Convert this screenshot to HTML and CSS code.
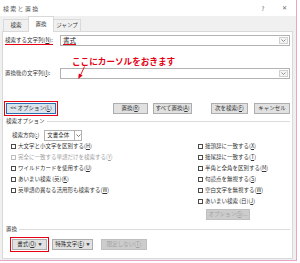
FILE: index.html
```html
<!DOCTYPE html>
<html lang="ja">
<head>
<meta charset="utf-8">
<title>検索と置換</title>
<link rel="stylesheet" href="styles.css">
</head>
<body>
<div class="dialog">
  <div class="titlebar">
    <span class="title">検索と置換</span>
    <span class="help">?</span>
    <span class="close">✕</span>
  </div>
  <div class="tabs">
    <span class="tab">検索</span>
    <span class="tab active">置換</span>
    <span class="tab wide">ジャンプ</span>
  </div>
  <div class="panel">
    <div class="field-row find">
      <span class="lbl"><span class="mark">検索する文字列(<u>N</u>):</span></span>
      <div class="combo">
        <span class="val"><span class="mark">書式</span></span>
        <span class="drop"><svg width="5" height="3" viewBox="0 0 5 3"><polyline points="0.5,0.5 2.5,2.5 4.5,0.5" fill="none" stroke="#777" stroke-width="0.8"/></svg></span>
      </div>
    </div>
    <div class="field-row repl">
      <span class="lbl">置換後の文字列(<u>I</u>):</span>
      <div class="combo">
        <span class="val"></span>
        <span class="drop"><svg width="5" height="3" viewBox="0 0 5 3"><polyline points="0.5,0.5 2.5,2.5 4.5,0.5" fill="none" stroke="#777" stroke-width="0.8"/></svg></span>
      </div>
    </div>
    <div class="btn-row">
      <span class="btn focus w-opt">&lt;&lt; オプション(<u>L</u>)</span>
      <span class="btn w-rep">置換(<u>R</u>)</span>
      <span class="btn w-all">すべて置換(<u>A</u>)</span>
      <span class="btn w-next">次を検索(<u>F</u>)</span>
      <span class="btn w-cancel">キャンセル</span>
    </div>
    <div class="section"><span>検索オプション</span><i class="rule"></i></div>
    <div class="dir-row">
      <span>検索方向(<u>:</u>)</span>
      <div class="select">
        <span class="val">文書全体</span>
        <span class="drop"><svg width="5" height="3" viewBox="0 0 5 3"><polyline points="0.5,0.5 2.5,2.5 4.5,0.5" fill="none" stroke="#555" stroke-width="0.8"/></svg></span>
      </div>
    </div>
    <div class="opts">
      <div class="col left">
        <div class="opt"><i class="cb"></i>大文字と小文字を区別する(<u>H</u>)</div>
        <div class="opt dis"><i class="cb"></i>完全に一致する単語だけを検索する(<u>Y</u>)</div>
        <div class="opt"><i class="cb"></i>ワイルドカードを使用する(<u>U</u>)</div>
        <div class="opt"><i class="cb"></i>あいまい検索 (英)(<u>K</u>)</div>
        <div class="opt"><i class="cb"></i>英単語の異なる活用形も検索する(<u>W</u>)</div>
      </div>
      <div class="col right">
        <div class="opt"><i class="cb"></i>接頭辞に一致する(<u>X</u>)</div>
        <div class="opt"><i class="cb"></i>接尾辞に一致する(<u>T</u>)</div>
        <div class="opt"><i class="cb"></i>半角と全角を区別する(<u>M</u>)</div>
        <div class="opt"><i class="cb"></i>句読点を無視する(<u>S</u>)</div>
        <div class="opt"><i class="cb"></i>空白文字を無視する(<u>W</u>)</div>
        <div class="opt"><i class="cb"></i>あいまい検索 (日)(<u>J</u>)</div>
        <span class="btn disabled w-optbtn">オプション(<u>S</u>)...</span>
      </div>
    </div>
    <div class="section repl-sec"><span>置換</span><i class="rule"></i></div>
    <div class="btn-row bottom">
      <span class="btn marked w-fmt">書式(<u>O</u>) <b class="caret">▼</b></span>
      <span class="btn w-spec">特殊文字(<u>E</u>) <b class="caret">▼</b></span>
      <span class="btn disabled w-lim">限定しない(<u>T</u>)</span>
    </div>
  </div>
  <div class="note">ここにカーソルをおきます</div>
  <svg class="arrow" width="10" height="14" viewBox="0 0 10 14">
    <line x1="7.5" y1="0.5" x2="3.6" y2="9" stroke="#e60012" stroke-width="0.9"/>
    <polygon points="1.2,13 1.8,7.6 5.6,9.4" fill="#e60012"/>
  </svg>
</div>
</body>
</html>
```

FILE: styles.css
```css
* { box-sizing: border-box; margin: 0; padding: 0; }
body {
  width: 300px;
  height: 263px;
  background: #fff;
  font-family: "Noto Sans CJK JP", "Noto Sans", sans-serif;
  font-size: 5.5px;
  line-height: 7px;
  color: #333;
  overflow: hidden;
}
u { text-decoration: underline; text-underline-offset: 0.5px; }
.dialog {
  position: relative;
  width: 297px;
  height: 261px;
  background: #f0f0f0;
  border-right: 1px solid #e8a5c6;
  border-bottom: 1px solid #e8a5c6;
}
.titlebar {
  height: 16px;
  background: #fff;
  display: flex;
  align-items: center;
  padding-left: 3px;
  color: #555;
}
.title { flex: 1; font-size: 6px; letter-spacing: 1.3px; }
.help { width: 6px; font-size: 6px; margin-right: 15px; text-align: center; }
.close { width: 7px; font-size: 5.5px; margin-right: 8px; text-align: center; color: #666; }
.tabs {
  height: 15px;
  display: flex;
  align-items: flex-end;
  padding-left: 3px;
  position: relative;
  z-index: 1;
}
.tab {
  width: 26px;
  height: 12px;
  margin-right: -1px;
  border: 1px solid #d9d9d9;
  border-bottom: none;
  background: #f0f0f0;
  text-align: center;
  line-height: 11px;
}
.tab.wide { width: 28px; }
.tab.active {
  height: 16px;
  margin-bottom: -1px;
  background: #fff;
  line-height: 14px;
}
.panel {
  margin-left: 2px;
  width: 291px;
  height: 228px;
  background: #fff;
  border: 1px solid #d9d9d9;
  padding: 0 2px;
}
.field-row {
  display: flex;
  align-items: center;
  height: 11px;
}
.find { margin-top: 3px; }
.repl { margin-top: 22px; }
.lbl { width: 55px; }
.mark { border-bottom: 1px solid #e60012; display: inline-block; line-height: 7px; }
.combo, .select {
  display: flex;
  align-items: stretch;
  height: 11px;
  border: 1px solid #b2b2b2;
  background: #fff;
}
.combo { flex: 1; }
.combo .val { flex: 1; padding-left: 2px; font-size: 6.5px; line-height: 9px; display: flex; align-items: center; color: #222; }
.drop {
  width: 9px;
  margin: 1px;
  border: 1px solid #d0d0d0;
  background: #f4f4f4;
  display: flex;
  align-items: center;
  justify-content: center;
}
.btn-row {
  display: flex;
  align-items: center;
  height: 11px;
  margin-top: 24px;
}
.btn {
  height: 11px;
  border: 1px solid #adadad;
  background: #e1e1e1;
  display: flex;
  align-items: center;
  justify-content: center;
  white-space: nowrap;
  line-height: 9px;
}
.btn.focus {
  border-color: #2a6db0;
  background: #dce5ee;
  outline: 1px solid #e60012;
  outline-offset: 1px;
}
.btn.marked {
  outline: 1px solid #e60012;
  outline-offset: 1px;
}
.btn.disabled {
  background: #cccccc;
  border-color: #bfbfbf;
  color: #a3a3a3;
}
.w-opt { width: 50px; margin-left: 1px; }
.w-rep { width: 35px; margin-left: 57px; }
.w-all { width: 39px; margin-left: 5px; }
.w-next { width: 37px; margin-left: 19px; }
.w-cancel { width: 36px; margin-left: 6px; }
.w-fmt { width: 35px; margin-left: 7px; }
.w-spec { width: 41px; margin-left: 5px; }
.w-lim { width: 46px; margin-left: 8px; }
.w-optbtn { width: 44px; margin-left: 8px; margin-top: 2px; }
.caret { font-weight: normal; font-size: 3.5px; margin-left: 2px; }
.section {
  display: flex;
  align-items: center;
  height: 8px;
  margin-top: 3px;
  padding-left: 1px;
}
.section .rule { flex: 1; height: 1px; background: #dcdcdc; margin-left: 2px; }
.repl-sec { margin-top: 5px; }
.bottom { margin-top: 6px; }
.dir-row {
  display: flex;
  align-items: center;
  height: 11px;
  margin-top: 5px;
  padding-left: 7px;
}
.select { width: 38px; margin-left: 5px; }
.select .val { flex: 1; padding-left: 2px; line-height: 9px; }
.select .drop { width: 7px; margin: 0; border: none; border-left: 1px solid #b2b2b2; background: #fff; }
.opts { display: flex; }
.col { display: flex; flex-direction: column; }
.col.left { width: 187px; margin-left: 6px; }
.opt {
  height: 11px;
  display: flex;
  align-items: center;
  white-space: nowrap;
}
.cb {
  width: 5px;
  height: 5px;
  border: 1px solid #4a4a4a;
  background: #fff;
  margin-right: 2px;
}
.opt.dis { color: #a0a0a0; }
.opt.dis .cb { border-color: #bcbcbc; }
.note {
  position: absolute;
  left: 72px;
  top: 56px;
  font-size: 8.6px;
  line-height: 10px;
  font-weight: bold;
  color: #e60012;
  white-space: nowrap;
}
.arrow { position: absolute; left: 77px; top: 66px; }
```
